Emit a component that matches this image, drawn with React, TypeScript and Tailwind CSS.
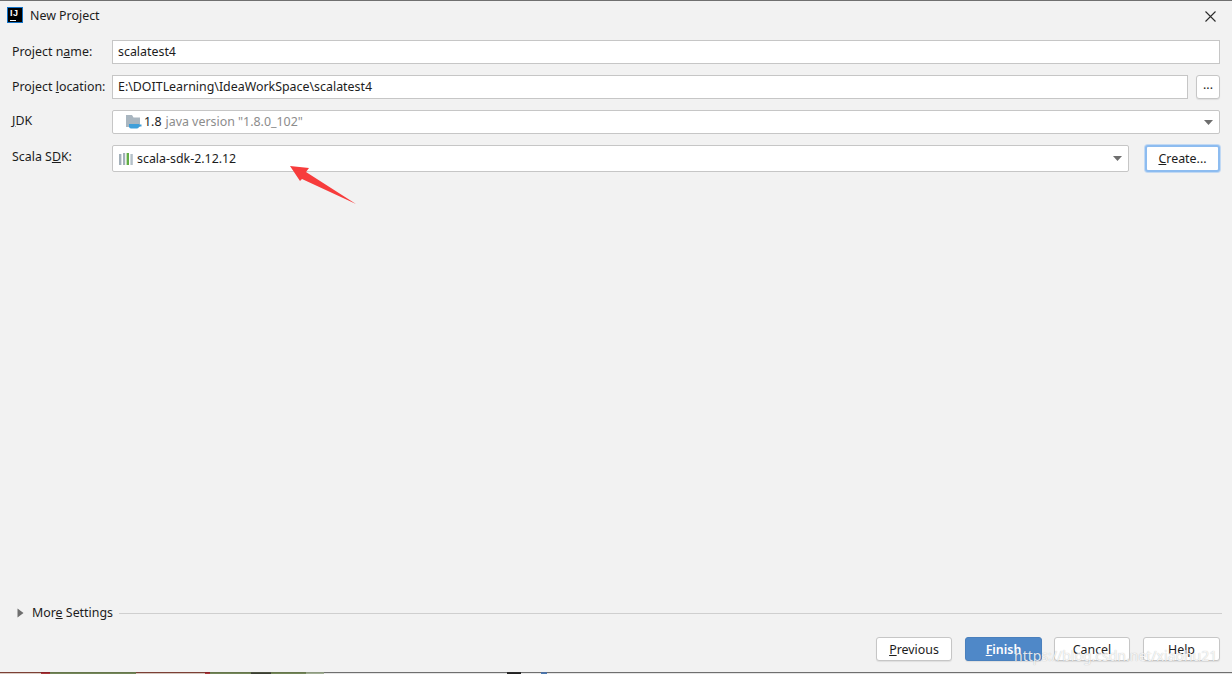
import type { ReactNode } from 'react';

const font = "font-['Noto_Sans','Open_Sans',sans-serif]";

// what shows of the desktop below the dialog: width, top pixel row, bottom pixel row
const desktopStrip: [number, string, string][] = [
  [41, '#7c3f35', '#d9cbc4'],
  [9, '#8a1f26', '#a83a3a'],
  [86, '#66774c', '#74875a'],
  [69, '#7c3f35', '#d3c5bd'],
  [5, '#8a1f26', '#a83a3a'],
  [41, '#66774c', '#74875a'],
  [20, '#4a4f3e', '#3b3f33'],
  [35, '#66774c', '#74875a'],
  [18, '#8d9a80', '#a3b096'],
  [183, '#6f6f6f', '#e4e4e4'],
  [14, '#2a2a2a', '#222222'],
  [20, '#6f6f6f', '#e8e8e8'],
  [6, '#4f6f9f', '#4a78b0'],
  [692, '#6f6f6f', '#e4e4e4'],
  [93, '#6f6f6f', '#ececec'],
];

function Caret() {
  return (
    <svg width="9" height="5" viewBox="0 0 9 5" className="shrink-0">
      <path d="M0 0h9L4.5 5z" fill="#6e6e6e" />
    </svg>
  );
}

function Label({ children, className = '' }: { children: ReactNode; className?: string }) {
  return <div className={`w-[100px] shrink-0 text-[12.4px] leading-[18px] text-[#1c1c1c] ${className}`}>{children}</div>;
}

function DialogButton({ children, className = '' }: { children: ReactNode; className?: string }) {
  return (
    <div className={`flex h-[24px] items-center justify-center rounded-[3px] border border-[#c6c6c6] bg-white pt-[2px] text-[12.4px] text-[#1c1c1c] shadow-[0_1px_1px_rgba(0,0,0,0.08)] ${className}`}>
      {children}
    </div>
  );
}

function FolderIcon() {
  return (
    <svg width="16" height="15" viewBox="0 0 16 15" className="shrink-0">
      <path d="M0 0h6l1.5 2.5H14V12H0z" fill="#a9b6c0" />
      <path d="M3 9h10v2.5a2 2 0 0 1-2 2H5a2 2 0 0 1-2-2z" fill="#3f9fd9" />
      <path d="M13 9.5h2.5v2H13z" fill="#3f9fd9" />
    </svg>
  );
}

function LibraryIcon() {
  return (
    <svg width="14" height="12" viewBox="0 0 14 12" className="shrink-0">
      <rect x="0" y="1" width="2.4" height="11" fill="#a3b0ba" />
      <rect x="4" y="0" width="2.2" height="12" fill="#a3b0ba" />
      <rect x="7.6" y="0" width="2.4" height="12" fill="#62ad45" />
      <rect x="11.4" y="1" width="2.4" height="11" fill="#b4c0c9" />
    </svg>
  );
}

export default function App() {
  return (
    <div className={`relative flex h-[674px] w-[1232px] flex-col overflow-hidden border-t border-[#707070] bg-[#f2f2f2] ${font}`}>
      <div className="flex h-[30px] shrink-0 items-center pl-[7px] pr-[16px]">
        <div className="-mt-[2px] flex h-[16px] w-[16px] shrink-0 flex-col border border-[#1273c9] bg-black pl-[2px] pt-[1px]">
          <span className="font-['Liberation_Sans',sans-serif] text-[9px] font-bold leading-[8px] tracking-[0.6px] text-white">IJ</span>
          <span className="mt-[3px] h-[1px] w-[6px] bg-white" />
        </div>
        <span className="ml-[7px] text-[12.4px] text-[#1c1c1c]">New Project</span>
        <svg width="11" height="11" viewBox="0 0 11 11" className="ml-auto shrink-0">
          <path d="M0.5 0.5l10 10M10.5 0.5l-10 10" stroke="#2b2b2b" strokeWidth="1.1" fill="none" />
        </svg>
      </div>

      <div className="mt-[9px] flex flex-col px-[12px]">
        <div className="flex h-[24px] items-center">
          <Label className="-mt-[1px]">
            Project n<span className="underline">a</span>me:
          </Label>
          <div className="flex h-full flex-1 items-center border border-[#c6c6c6] bg-white pl-[5px] text-[12.4px] text-[#1c1c1c]">scalatest4</div>
        </div>

        <div className="mt-[11px] flex h-[24px] items-center">
          <Label className="-mt-[1px]">
            Project <span className="underline">l</span>ocation:
          </Label>
          <div className="flex h-full flex-1 items-center border border-[#c6c6c6] bg-white pl-[5px] text-[12.4px] text-[#1c1c1c]">
            E:\DOITLearning\IdeaWorkSpace\scalatest4
          </div>
          <DialogButton className="ml-[8px] w-[24px] !pt-0 pb-[3px]">...</DialogButton>
        </div>

        <div className="mt-[11px] flex h-[24px] items-center">
          <Label className="-mt-[3px]">
            <span className="underline">J</span>DK
          </Label>
          <div className="flex h-full flex-1 items-center rounded-[2px] border border-[#c6c6c6] bg-white pl-[13px] pr-[6px] text-[12.4px]">
            <FolderIcon />
            <span className="ml-[2px] text-[#1c1c1c]">1.8</span>
            <span className="ml-[4px] text-[#8c8c8c]">java version "1.8.0_102"</span>
            <span className="ml-auto">
              <Caret />
            </span>
          </div>
        </div>

        <div className="mt-[11px] flex h-[27px] items-center">
          <Label className="-mt-[4px]">
            Scala S<span className="underline">D</span>K:
          </Label>
          <div className="flex h-full w-[1017px] items-center rounded-[2px] border border-[#c6c6c6] bg-white pl-[6px] pr-[6px] text-[12.4px] text-[#1c1c1c]">
            <LibraryIcon />
            <span className="ml-[4px] pt-px">scala-sdk-2.12.12</span>
            <span className="ml-auto">
              <Caret />
            </span>
          </div>
          <div className="ml-[16px] flex h-full flex-1 items-center justify-center rounded-[3px] border-2 border-[#8dbcf0] bg-white pt-px text-[12.4px] text-[#1c1c1c] shadow-[0_0_0_1px_rgba(160,200,245,0.6)]">
            <span>
              <span className="underline">C</span>reate...
            </span>
          </div>
        </div>
      </div>

      <div className="mt-auto flex h-[18px] items-center pl-[17px] pr-[10px]">
        <svg width="7" height="10" viewBox="0 0 7 10" className="shrink-0">
          <path d="M0.5 0.5v9L6.5 5z" fill="#6e6e6e" />
        </svg>
        <span className="ml-[8px] text-[12.4px] leading-[18px] text-[#1c1c1c]">
          Mor<span className="underline">e</span> Settings
        </span>
        <div className="ml-[6px] h-px flex-1 bg-[#cfcfcf]" />
      </div>

      <div className="mt-[15px] mb-[11px] flex justify-end pr-[12px]">
        <DialogButton className="w-[76px]">
          <span>
            <span className="underline">P</span>revious
          </span>
        </DialogButton>
        <DialogButton className="ml-[13px] w-[77px] !border-[#4a80bd] !bg-[#4f88c8] font-semibold !text-white">
          <span>
            <span className="underline">F</span>inish
          </span>
        </DialogButton>
        <DialogButton className="ml-[12px] w-[76px]">Cancel</DialogButton>
        <DialogButton className="ml-[13px] w-[77px]">Help</DialogButton>
      </div>

      <div className="flex h-[2px] shrink-0">
        {desktopStrip.map(([width, top, bottom], i) => (
          <div key={i} className="flex h-[2px] shrink-0 flex-col" style={{ width }}>
            <div className="h-px" style={{ backgroundColor: top }} />
            <div className="h-px" style={{ backgroundColor: bottom }} />
          </div>
        ))}
      </div>

      <svg width="70" height="44" viewBox="0 0 70 44" className="absolute left-[288px] top-[163px]">
        <path d="M2 2l19 2-3 4 50 32-54-25-2 2z" fill="#f73c3c" />
      </svg>

      <span className="absolute left-[1014px] top-[644px] whitespace-nowrap text-[14px] text-white/85 [text-shadow:0_0_1px_rgba(0,0,0,0.3)]">https://blog.csdn.net/xiaohu21</span>
    </div>
  );
}
